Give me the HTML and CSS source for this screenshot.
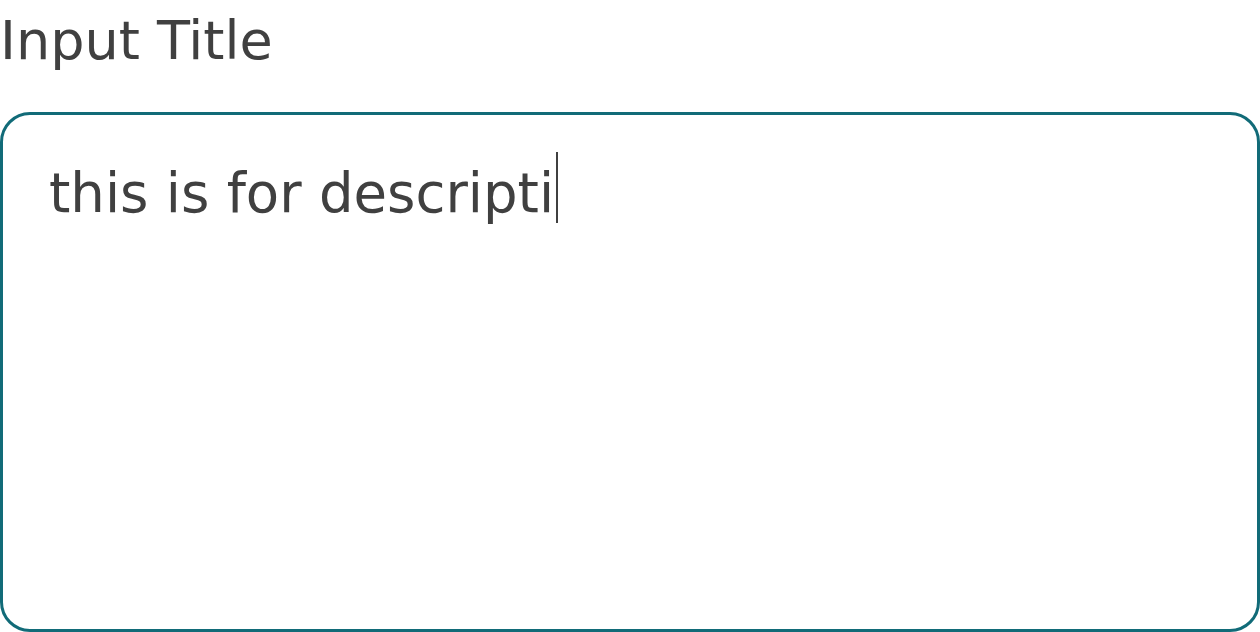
FILE: index.html
```html
<!DOCTYPE html>
<html>
<head>
<meta charset="utf-8">
<link rel="stylesheet" href="styles.css">
</head>
<body>
<div class="field">
  <label class="title">Input Title</label>
  <div class="box"><span class="value">this is for descripti</span><span class="caret"></span></div>
</div>
</body>
</html>
```
FILE: styles.css
```css
html, body { margin: 0; padding: 0; background: #fff; }
body { width: 1260px; height: 632px; overflow: hidden; font-family: "DejaVu Sans", sans-serif; color: #404040; }
.field { display: flex; flex-direction: column; }
.title { font-size: 54px; line-height: 82px; height: 82px; }
.box {
  box-sizing: border-box;
  margin-top: 30px;
  height: 520px;
  border: 3px solid #116b78;
  border-radius: 30px;
  padding: 37px 0 0 46px;
  display: flex;
  align-items: flex-start;
}
.value { font-size: 54.5px; line-height: 70px; margin-top: 6px; }
.caret { width: 2px; height: 71px; background: #404040; margin-left: 2px; }
```
